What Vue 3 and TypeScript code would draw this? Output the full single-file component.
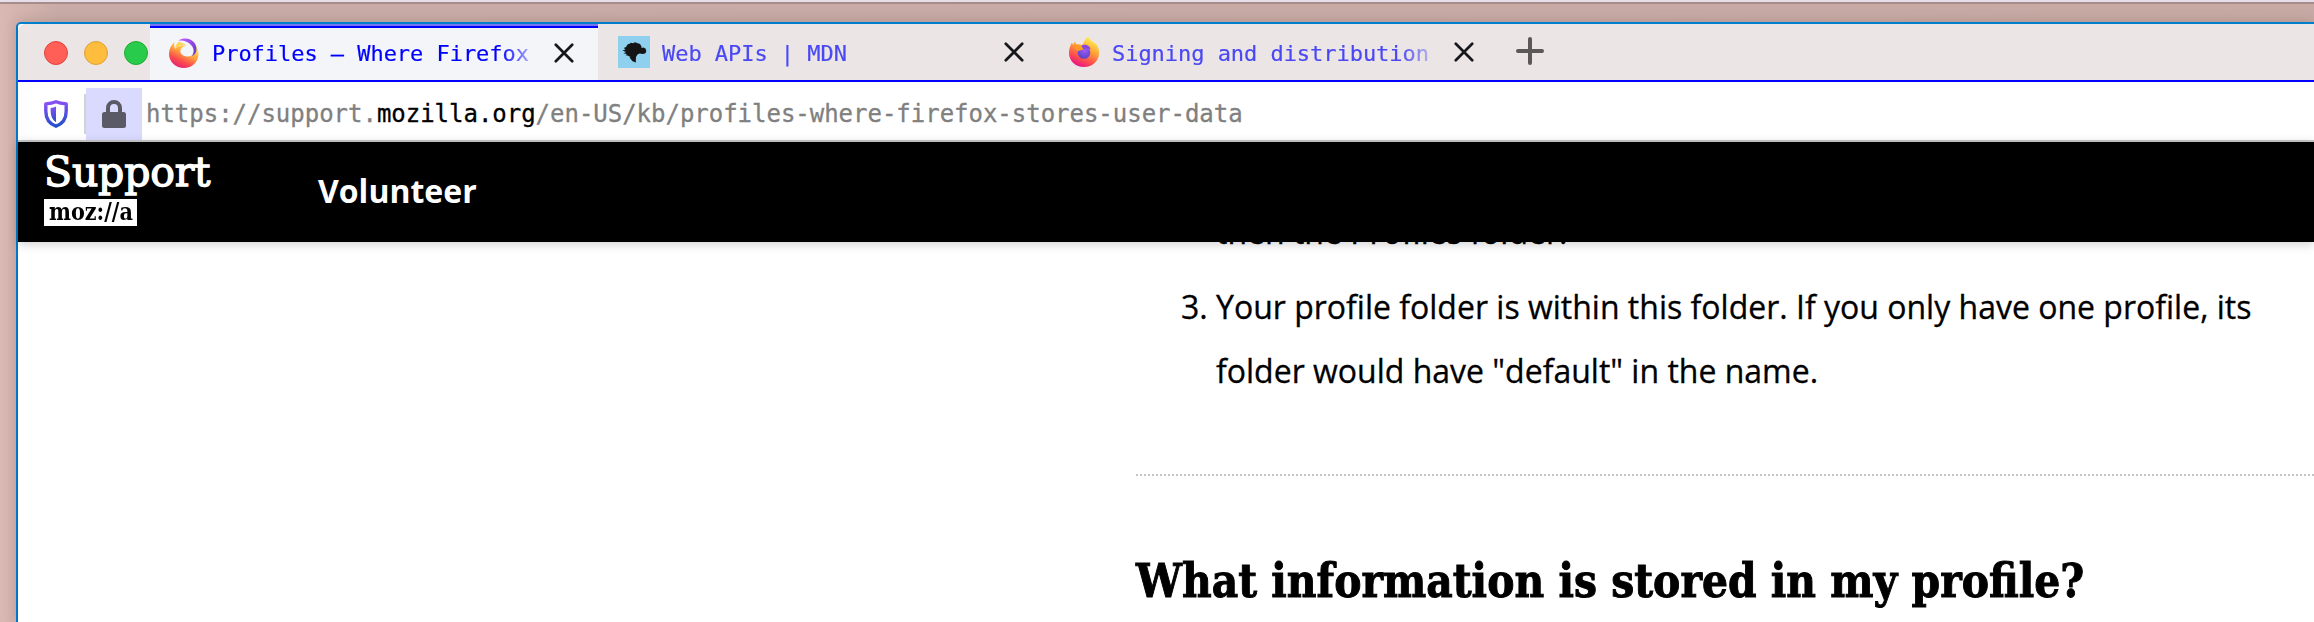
<script setup lang="ts">
interface Tab {
  title: string
  icon: 'swirl' | 'dino' | 'firefox'
  active?: boolean
}

const tabs: Tab[] = [
  { title: 'Profiles – Where Firefox', icon: 'swirl', active: true },
  { title: 'Web APIs | MDN', icon: 'dino' },
  { title: 'Signing and distribution', icon: 'firefox' },
]
</script>

<template>
  <div class="desktop">
    <div class="window">
      <div class="tabstrip">
        <div class="lights">
          <span class="light red"></span>
          <span class="light yellow"></span>
          <span class="light green"></span>
        </div>
        <div v-for="tab in tabs" :key="tab.title" class="tab" :class="{ active: tab.active }">
          <svg v-if="tab.icon === 'swirl'" class="favicon" viewBox="0 0 32 32">
            <defs>
              <linearGradient id="sw" x1="0.8" y1="0.1" x2="0.3" y2="1">
                <stop offset="0" stop-color="#fff36b" />
                <stop offset="0.4" stop-color="#ffa53f" />
                <stop offset="0.72" stop-color="#fb4b4d" />
                <stop offset="1" stop-color="#e2207a" />
              </linearGradient>
              <linearGradient id="sp" x1="0" y1="0" x2="1" y2="1">
                <stop offset="0" stop-color="#c65cff" />
                <stop offset="1" stop-color="#5a35c8" />
              </linearGradient>
            </defs>
            <path d="M6.500 5 C3 8 1 12 1 17 C1 25 8 31 16 31 C24 31 30.500 25 30.500 17 C30.500 13.500 29.500 10.500 28 8.500 C29 14 25.500 19.500 20 19.500 C15 19.500 12 17 12.500 13.500 C13 11 15 9.500 18 9 C14 7 9 9 7 12 C6 9 6 7 6.500 5Z" fill="url(#sw)" />
            <path d="M11 4.500 C9 6 7 9 7 12 C9 9 14 6.500 18.500 8.500 C15 5.500 12.500 6 11 4.500Z" fill="#ffd34f" />
            <path d="M10.500 3.500 C19 -1.500 28.500 4 28.500 12 C28.500 15.500 26.500 18 24 19 C26 15.500 26.500 12 23.500 8.500 C20.500 4.500 15.500 3 10.500 3.500Z" fill="url(#sp)" />
          </svg>
          <svg v-else-if="tab.icon === 'dino'" class="favicon" viewBox="0 0 32 32">
            <rect width="32" height="32" fill="#8fd0ef" />
            <path d="M9.500 8.500 L12 7.600 L13 6.800 L15 7.200 L17 6.300 L19 7 L22 8 L23.500 10.500 L23.500 12 L25.500 11.500 L27.500 12.500 L28.300 15 L27.500 17.300 L25 18 L21.500 17.500 L19.500 18.500 L18 21 L17.800 26.500 L14.500 25.300 L11.500 21.500 L12.500 21 L9.500 19.500 L7.500 19.200 L9 18 L5.500 17.200 L8 15.900 L4.500 14.500 L7.500 13.500 L5.800 12 L8 11 Z" fill="#151515" />
          </svg>
          <svg v-else class="favicon" viewBox="0 0 32 32">
            <defs>
              <linearGradient id="fx" x1="0.8" y1="0.05" x2="0.35" y2="1">
                <stop offset="0" stop-color="#fff44f" />
                <stop offset="0.4" stop-color="#ffa436" />
                <stop offset="0.75" stop-color="#ff4a4f" />
                <stop offset="1" stop-color="#e31587" />
              </linearGradient>
              <radialGradient id="fp" cx="0.55" cy="0.3" r="0.7">
                <stop offset="0" stop-color="#a35cf5" />
                <stop offset="1" stop-color="#5843c8" />
              </radialGradient>
            </defs>
            <path d="M20 0.500 C22 5 26 6 28 8 C30 10 31 13 31 17 C31 25 24.500 31 16 31 C7.500 31 1 25 1 17 C1 12 3 8 4 6.500 L5 9 L7 5.500 L8.500 8.500 C11 8 13 9 14 9 C16 7.500 16 4 20 0.500Z" fill="url(#fx)" />
            <circle cx="16" cy="16.500" r="6.300" fill="url(#fp)" />
            <path d="M6 9.500 C10 8 15 11 15.500 13.500 C13 13.500 12 15 9.500 15 C8 13 6.500 12 6 9.500Z" fill="#ff9b24" />
            <path d="M13.500 9.500 C17 7.500 22.500 10 22.500 13.500 C20 11.500 17.500 12 15.500 13 Z" fill="#8a45dd" />
          </svg>
          <span class="title">{{ tab.title }}</span>
          <svg class="close" viewBox="0 0 20 20">
            <path d="M1.800 1.800 L18.200 18.200 M18.200 1.800 L1.800 18.200" stroke="#15171b" stroke-width="2.700" stroke-linecap="round" />
          </svg>
        </div>
        <svg class="plus" viewBox="0 0 28 28">
          <path d="M14 2 V26 M2 14 H26" stroke="#5b5856" stroke-width="4" stroke-linecap="round" />
        </svg>
      </div>

      <div class="urlbar">
        <div class="field">
          <svg class="shield" viewBox="0 0 24 28">
            <defs>
              <linearGradient id="sh" x1="0.4" y1="0" x2="0.5" y2="1">
                <stop offset="0" stop-color="#8a50f4" />
                <stop offset="1" stop-color="#2450cc" />
              </linearGradient>
            </defs>
            <path d="M12 1.700 C15 3 18 3.600 22.200 3.900 V11 C22.200 19 18 24 12 26.200 C6 24 1.800 19 1.800 11 V3.900 C6 3.600 9 3 12 1.700Z" fill="none" stroke="url(#sh)" stroke-width="3.400" stroke-linejoin="round" />
            <path d="M12 6.500 V22.200 C8.500 20 6.600 16 6.600 11 V8 C8.500 7.800 10.500 7.300 12 6.500Z" fill="url(#sh)" />
          </svg>
          <span class="divider"></span>
          <span class="identity">
            <svg class="lock" viewBox="0 0 24 28">
              <path d="M6 13 V8 A6 6 0 0 1 18 8 V13" fill="none" stroke="#5a5966" stroke-width="4" />
              <rect x="0" y="12" width="24" height="16" rx="2.500" fill="#5a5966" />
            </svg>
          </span>
          <span class="url">https://support.<b>mozilla.org</b>/en-US/kb/profiles-where-firefox-stores-user-data</span>
        </div>
      </div>

      <header class="site-header">
        <div class="logo">
          <span class="support">Support</span>
          <span class="moz"><span class="squeeze">moz://a</span></span>
        </div>
        <nav class="nav">Volunteer</nav>
      </header>

      <main class="page">
        <article class="article">
          <ol class="steps">
            <li><span class="num"></span><span>then the Profiles folder.</span></li>
            <li><span class="num">3.</span><span>Your profile folder is within this folder. If you only have one profile, its<br />folder would have "default" in the name.</span></li>
          </ol>
          <div class="rule"></div>
          <h2 class="heading">What information is stored in my profile?</h2>
        </article>
      </main>
    </div>
  </div>
</template>

<style>
html,
body {
  margin: 0;
  overflow: hidden;
}
</style>

<style scoped>
.desktop {
  box-sizing: border-box;
  width: 2314px;
  height: 620px;
  overflow: hidden;
  padding: 18px 0 0 16px;
  border-top: 2px solid #a88c8a;
  background: linear-gradient(90deg, #dab8b3 0, #c9aca7 60px, #c8aaa5 100%);
  box-shadow: 0 -2px #e6dfea;
  margin-top: 2px;
}

.window {
  box-sizing: border-box;
  width: 2298px;
  height: 602px;
  border-left: 2px solid #0078c8;
  border-top: 2px solid #0080cc;
  border-top-left-radius: 5px;
  background: #fff;
  box-shadow: 0 0 14px rgba(60, 30, 30, 0.18);
}

.tabstrip {
  box-sizing: border-box;
  display: flex;
  height: 58px;
  background: #ebe6e5;
  border-bottom: 2px solid #00f;
  border-top-left-radius: 8px;
}

.lights {
  box-sizing: border-box;
  display: flex;
  gap: 16px;
  width: 132px;
  padding: 17px 0 0 26px;
}

.light {
  box-sizing: border-box;
  flex: none;
  width: 24px;
  height: 24px;
  border-radius: 50%;
}

.red {
  background: #ff5f57;
  border: 1px solid #e0443e;
}

.yellow {
  background: #ffbd3e;
  border: 1px solid #dea032;
}

.green {
  background: #29cb4c;
  border: 1px solid #1eac2e;
}

.tab {
  box-sizing: border-box;
  display: flex;
  align-items: center;
  flex: none;
  width: 450px;
  height: 56px;
  padding: 2px 0 0 20px;
  color: #4a48f4;
}

.tab.active {
  width: 448px;
  padding: 0 0 0 18px;
  border-top: 2px solid #00f;
  box-shadow: 0 -2px #7674f0;
  height: 54px;
  margin-top: 2px;
  background: #f4f5f8;
  color: #00f;
}

.favicon {
  width: 32px;
  height: 32px;
  margin-top: -2px;
}

.title {
  width: 332px;
  margin: 1px 10px 0 12px;
  overflow: hidden;
  white-space: nowrap;
  font: 22px/30px 'DejaVu Sans Mono', monospace;
  letter-spacing: -0.04px;
  -webkit-text-stroke: 0.2px;
  mask-image: linear-gradient(90deg, #000 288px, transparent 332px);
}

.active .title {
  margin-top: -1px;
}

.close {
  width: 20px;
  height: 20px;
  margin-top: -2px;
}

.plus {
  width: 28px;
  height: 28px;
  margin: 13px 0 0 18px;
}

.urlbar {
  box-sizing: border-box;
  height: 60px;
  padding: 6px 0 0 10px;
  background: #fdfdfe;
  border-bottom: 2px solid #c9c9ca;
}

.field {
  display: flex;
  align-items: center;
  height: 52px;
  padding-left: 16px;
  border-radius: 8px 0 0 8px;
  background: #fff;
}

.shield {
  width: 24px;
  height: 28px;
  margin-right: 16px;
}

.divider {
  width: 2px;
  height: 40px;
  background: #d2d2d4;
}

.identity {
  display: flex;
  align-items: center;
  justify-content: center;
  width: 56px;
  height: 52px;
  background: #dadaff;
}

.lock {
  width: 24px;
  height: 28px;
}

.url {
  margin-left: 4px;
  white-space: nowrap;
  font: 24px/32px 'DejaVu Sans Mono', monospace;
  letter-spacing: -0.02px;
  -webkit-text-stroke: 0.3px;
  color: #808080;
}

.url b {
  font-weight: 400;
  color: #000;
}

.site-header {
  position: relative;
  z-index: 1;
  display: flex;
  height: 100px;
  background: #000;
  color: #fff;
  box-shadow: 0 2px 10px rgba(0, 0, 0, 0.2);
}

.logo {
  width: 300px;
  padding: 4px 0 0 26px;
  box-sizing: border-box;
}

.squeeze {
  display: inline-block;
  transform-origin: 0 50%;
}

.support {
  display: block;
  height: 53px;
  font: 41px/53px 'DejaVu Serif', serif;
  letter-spacing: -0.2px;
  -webkit-text-stroke: 1.3px #fff;
}

.moz {
  display: block;
  width: 93px;
  height: 27px;
  background: #fff;
  color: #000;
  font: 700 24px/25px 'DejaVu Serif', serif;
}

.moz .squeeze {
  margin-left: 5px;
  transform: scaleX(0.865);
}

.nav {
  font: 700 32px/98px 'Open Sans', sans-serif;
}

.page {
  padding-left: 1118px;
}

.article {
  height: 380px;
  margin-top: -42px;
  color: #000;
}

.steps {
  margin: 0;
  padding: 0;
  list-style: none;
  font: 32px/64px 'Open Sans', sans-serif;
  -webkit-text-stroke: 0.3px;
}

.steps li {
  display: flex;
  white-space: nowrap;
  margin-bottom: 11px;
}

.num {
  width: 80px;
  box-sizing: border-box;
  padding-left: 45px;
}

.rule {
  margin-top: 71px;
  height: 2px;
  background: repeating-linear-gradient(90deg, #c4c4c4 0 2px, transparent 2px 4px);
}

.heading {
  width: max-content;
  margin: 75px 0 0;
  font: 700 46px/60px 'DejaVu Serif', serif;
  white-space: nowrap;
  -webkit-text-stroke: 1px #000;
  transform: scaleX(0.889);
  transform-origin: 0 50%;
}
</style>
